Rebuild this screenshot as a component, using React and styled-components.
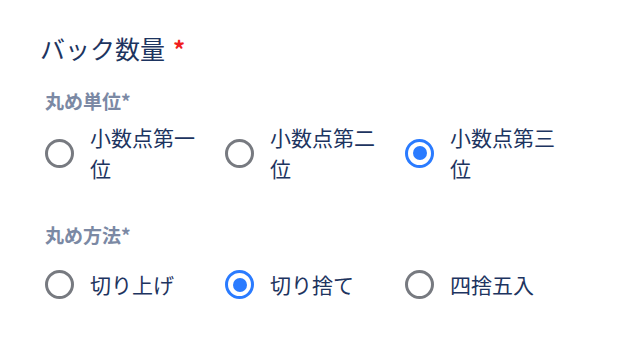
import styled, { createGlobalStyle } from "styled-components";

const GlobalStyle = createGlobalStyle`
  body {
    margin: 0;
    background: #ffffff;
    font-family: "Noto Sans CJK JP", "Noto Sans", sans-serif;
  }
`;

const unitOptions = [
  { label: "小数点第一位", checked: false },
  { label: "小数点第二位", checked: false },
  { label: "小数点第三位", checked: true },
];

const methodOptions = [
  { label: "切り上げ", checked: false },
  { label: "切り捨て", checked: true },
  { label: "四捨五入", checked: false },
];

export default function App() {
  return (
    <>
      <GlobalStyle />
      <Page>
        <Title>
          バック数量<Star>*</Star>
        </Title>
        <Group>
          <GroupLabel>丸め単位*</GroupLabel>
          <Row>
            {unitOptions.map((o) => (
              <Option key={o.label}>
                <Radio $checked={o.checked} />
                <OptionText>{o.label}</OptionText>
              </Option>
            ))}
          </Row>
        </Group>
        <Group $gap={21}>
          <GroupLabel>丸め方法*</GroupLabel>
          <Row>
            {methodOptions.map((o) => (
              <Option key={o.label}>
                <Radio $checked={o.checked} />
                <OptionText>{o.label}</OptionText>
              </Option>
            ))}
          </Row>
        </Group>
      </Page>
    </>
  );
}

const Page = styled.div`
  padding: 30px 0 0 40px;
  display: flex;
  flex-direction: column;
`;

const Title = styled.h1`
  margin: 0;
  font-size: 25px;
  line-height: 36px;
  font-weight: 400;
  color: #1d3460;
`;

const Star = styled.span`
  color: #f01e1e;
  margin-left: 8px;
  font-size: 24px;
  font-weight: 700;
`;

const Group = styled.div`
  display: flex;
  flex-direction: column;
  gap: ${(p) => p.$gap || 8}px;
  padding-left: 5px;
  margin-top: 20px;
  & + & {
    margin-top: 37px;
  }
`;

const GroupLabel = styled.div`
  font-size: 19px;
  line-height: 27px;
  font-weight: 700;
  color: #7b89a4;
`;

const Row = styled.div`
  display: flex;
`;

const Option = styled.label`
  width: 180px;
  display: flex;
  align-items: center;
  gap: 16px;
`;

const Radio = styled.span`
  flex: none;
  width: 29px;
  height: 29px;
  box-sizing: border-box;
  border-radius: 50%;
  border: 3px solid ${(p) => (p.$checked ? "#2a7bff" : "#777a80")};
  display: flex;
  align-items: center;
  justify-content: center;
  &::after {
    content: "";
    width: 14px;
    height: 14px;
    border-radius: 50%;
    background: #2a7bff;
    display: ${(p) => (p.$checked ? "block" : "none")};
  }
`;

const OptionText = styled.span`
  max-width: 115px;
  font-size: 21px;
  line-height: 31px;
  color: #1d3460;
`;
